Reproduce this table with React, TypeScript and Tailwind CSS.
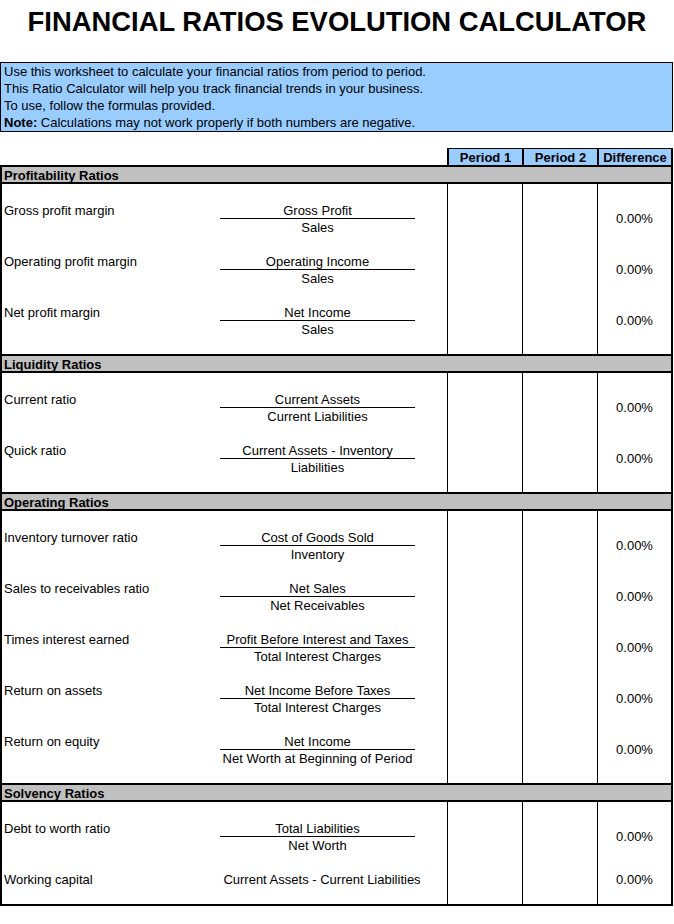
import React from "react";

type Item = { label: string; num: string; den?: string };
type Section = { title: string; items: Item[] };

const sections: Section[] = [
  {
    title: "Profitability Ratios",
    items: [
      { label: "Gross profit margin", num: "Gross Profit", den: "Sales" },
      { label: "Operating profit margin", num: "Operating Income", den: "Sales" },
      { label: "Net profit margin", num: "Net Income", den: "Sales" },
    ],
  },
  {
    title: "Liquidity Ratios",
    items: [
      { label: "Current ratio", num: "Current Assets", den: "Current Liabilities" },
      { label: "Quick ratio", num: "Current Assets - Inventory", den: "Liabilities" },
    ],
  },
  {
    title: "Operating Ratios",
    items: [
      { label: "Inventory turnover ratio", num: "Cost of Goods Sold", den: "Inventory" },
      { label: "Sales to receivables ratio", num: "Net Sales", den: "Net Receivables" },
      { label: "Times interest earned", num: "Profit Before Interest and Taxes", den: "Total Interest Charges" },
      { label: "Return on assets", num: "Net Income Before Taxes", den: "Total Interest Charges" },
      { label: "Return on equity", num: "Net Income", den: "Net Worth at Beginning of Period" },
    ],
  },
  {
    title: "Solvency Ratios",
    items: [
      { label: "Debt to worth ratio", num: "Total Liabilities", den: "Net Worth" },
      { label: "Working capital", num: "Current Assets - Current Liabilities" },
    ],
  },
];

function ItemRow({ item }: { item: Item }) {
  const two = !!item.den;
  return (
    <div className="flex">
      <div className="w-[218px] shrink-0 pt-[17px] pl-[2px] whitespace-nowrap leading-[19px]">
        <div className="h-[17px]">{item.label}</div>
        {two && <div className="h-[17px]" />}
      </div>
      <div className="w-[195px] shrink-0 pt-[17px] leading-[19px]">
        {two ? (
          <>
            <div className="h-[18px] border-b border-black flex justify-center whitespace-nowrap">
              <span>{item.num}</span>
            </div>
            <div className="h-[16px] leading-[17px] flex justify-center whitespace-nowrap">{item.den}</div>
          </>
        ) : (
          <div className="h-[17px] flex justify-center whitespace-nowrap pl-[9px]">{item.num}</div>
        )}
      </div>
      <div className="w-[32px] shrink-0" />
      <div className="w-[75px] shrink-0 border-l border-black" />
      <div className="w-[75px] shrink-0 border-l border-black" />
      <div className="w-[74px] shrink-0 border-l border-black pt-[17px]">
        <div className={`${two ? "h-[34px]" : "h-[17px]"} pt-px flex items-center justify-center leading-[17px]`}>
          0.00%
        </div>
      </div>
    </div>
  );
}

function BlankRow() {
  return (
    <div className="flex h-[17px]">
      <div className="w-[445px] shrink-0" />
      <div className="w-[75px] shrink-0 border-l border-black" />
      <div className="w-[75px] shrink-0 border-l border-black" />
      <div className="w-[74px] shrink-0 border-l border-black" />
    </div>
  );
}

export default function App() {
  return (
    <div className="w-[674px] h-[924px] bg-white text-black text-[13px] font-['Liberation_Sans',Arial,sans-serif]">
      <div className="h-[44px] leading-[44px] text-center text-[27.4px] font-bold mb-[18px]">
        FINANCIAL RATIOS EVOLUTION CALCULATOR
      </div>
      <div className="w-[673px] border border-black bg-[#99ccff] pl-[3px] leading-[17px]">
        <div>Use this worksheet to calculate your financial ratios from period to period.</div>
        <div>This Ratio Calculator will help you track financial trends in your business.</div>
        <div>To use, follow the formulas provided.</div>
        <div>
          <span className="font-bold">Note:</span> Calculations may not work properly if both numbers are negative.
        </div>
      </div>
      <div className="mt-[16px] w-[673px]">
        <div className="flex h-[17px] leading-[18px] font-bold">
          <div className="w-[447px] shrink-0" />
          <div className="w-[75px] shrink-0 bg-[#99ccff] border-t border-l-2 border-black text-center">Period 1</div>
          <div className="w-[75px] shrink-0 bg-[#99ccff] border-t border-l-2 border-black text-center">Period 2</div>
          <div className="w-[76px] shrink-0 bg-[#99ccff] border-t border-l-2 border-r-2 border-black text-center">Difference</div>
        </div>
        <div className="border-x-2 border-b-2 border-black">
          {sections.map((s) => (
            <div key={s.title}>
              <div className="h-[19px] bg-[#c0c0c0] border-y-2 border-black font-bold leading-[17px] pl-[2px]">
                {s.title}
              </div>
              {s.items.map((it) => (
                <ItemRow key={it.label} item={it} />
              ))}
              <BlankRow />
            </div>
          ))}
        </div>
      </div>
    </div>
  );
}
